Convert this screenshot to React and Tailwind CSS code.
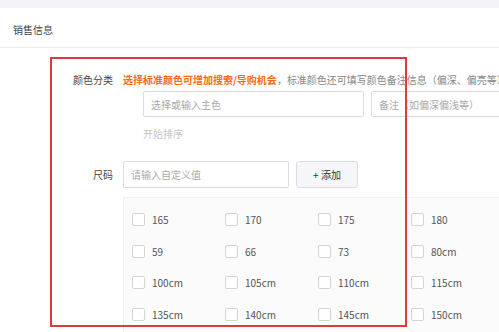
const sizes = [
  "165", "170", "175", "180",
  "59", "66", "73", "80cm",
  "100cm", "105cm", "110cm", "115cm",
  "135cm", "140cm", "145cm", "150cm",
];

const App = () => {
  return (
    <div
      className="relative w-full h-[332px] overflow-hidden bg-white text-[10px] text-[#444]"
      style={{ fontFamily: '"Noto Sans CJK SC", "Noto Sans", sans-serif' }}
    >
      {/* top band */}
      <div className="h-2 bg-[#f2f4f7]" />

      {/* header */}
      <div className="h-10 pt-1 pl-[13px] flex items-center border-b border-[#ececec]">
        销售信息
      </div>

      {/* form */}
      <div className="pt-[22px]">
        {/* 颜色分类 */}
        <div className="flex">
          <div className="w-[113px] shrink-0 text-right h-5 leading-5">颜色分类</div>
          <div className="ml-[10px] flex-1 min-w-0">
            <div className="h-5 leading-5 whitespace-nowrap">
              <span className="font-bold text-[#ff6a13]">选择标准颜色可增加搜索/导购机会</span>
              <span className="text-[#888]">，标准颜色还可填写颜色备注信息（偏深、偏亮等）</span>
            </div>
            <div className="mt-[1px] pl-5 flex gap-[7px]">
              <div className="w-[221px] h-[26px] shrink-0 border border-[#dcdcdc] rounded-[2px] flex items-center pl-[7px] text-[#aaa]">
                选择或输入主色
              </div>
              <div className="w-[200px] h-[26px] shrink-0 border border-[#dcdcdc] rounded-[2px] flex items-center pl-[7px] text-[#aaa] whitespace-nowrap">
                备注（如偏深偏浅等）
              </div>
            </div>
            <div className="mt-[7px] pl-5 h-5 leading-5 text-[#c4c4c4]">开始排序</div>
          </div>
        </div>

        {/* 尺码 */}
        <div className="flex mt-[17px]">
          <div className="w-[113px] shrink-0 text-right h-[27px] leading-[27px]">尺码</div>
          <div className="ml-[10px] flex-1 min-w-0">
            <div className="flex gap-[7px]">
              <div className="w-[166px] h-[27px] border border-[#dcdcdc] rounded-[2px] flex items-center pl-[7px] text-[#aaa]">
                请输入自定义值
              </div>
              <button className="w-[62px] h-[27px] border border-[#dcdcdc] rounded-[3px] bg-[#f5f6f9] text-[#333]">
                + 添加
              </button>
            </div>
            <div className="mt-[9px] w-[400px] h-[200px] bg-[#fbfbfb] border border-[#f0f0f0] pt-[14px] pl-[8px]">
              <div className="grid grid-cols-[93px_93px_93px_93px] auto-rows-[31.7px]">
                {sizes.map((s) => (
                  <div key={s} className="flex items-start gap-[7px]">
                    <span className="w-[13px] h-[13px] mt-[1px] bg-white border border-[#d4d4d4] rounded-[2px]" />
                    <span className="leading-[16px] text-[#555]">{s}</span>
                  </div>
                ))}
              </div>
            </div>
          </div>
        </div>
      </div>

      {/* annotation box */}
      <div className="absolute left-[50px] top-[57px] w-[357px] h-[270px] border-2 border-[#df3b3e] pointer-events-none" />
    </div>
  );
};

export default App;
